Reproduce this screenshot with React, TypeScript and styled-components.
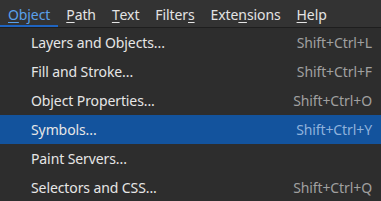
import styled, { createGlobalStyle } from 'styled-components';

const GlobalStyle = createGlobalStyle`
  body {
    margin: 0;
    background: #2d2d2d;
    font-family: 'Noto Sans', 'Open Sans', sans-serif;
  }
`;

type TopItem = { label: string; mnemonic: number; active?: boolean };

const topItems: TopItem[] = [
  { label: 'Object', mnemonic: 0, active: true },
  { label: 'Path', mnemonic: 0 },
  { label: 'Text', mnemonic: 0 },
  { label: 'Filters', mnemonic: 6 },
  { label: 'Extensions', mnemonic: 4 },
  { label: 'Help', mnemonic: 0 },
];

const menuItems = [
  { label: 'Layers and Objects...', shortcut: 'Shift+Ctrl+L' },
  { label: 'Fill and Stroke...', shortcut: 'Shift+Ctrl+F' },
  { label: 'Object Properties...', shortcut: 'Shift+Ctrl+O' },
  { label: 'Symbols...', shortcut: 'Shift+Ctrl+Y', selected: true },
  { label: 'Paint Servers...', shortcut: '' },
  { label: 'Selectors and CSS...', shortcut: 'Shift+Ctrl+Q' },
];

const Label = ({ text, at }: { text: string; at: number }) => (
  <>
    {text.slice(0, at)}
    <Mnemonic>{text[at]}</Mnemonic>
    {text.slice(at + 1)}
  </>
);

export default function App() {
  return (
    <>
      <GlobalStyle />
      <Window>
        <MenuBar>
          {topItems.map((item) => (
            <MenuBarItem key={item.label} $active={!!item.active}>
              <Label text={item.label} at={item.mnemonic} />
            </MenuBarItem>
          ))}
        </MenuBar>
        <Menu>
          {menuItems.map((item) => (
            <MenuRow key={item.label} $selected={!!item.selected}>
              <span>{item.label}</span>
              <Shortcut $selected={!!item.selected}>{item.shortcut}</Shortcut>
            </MenuRow>
          ))}
        </Menu>
      </Window>
    </>
  );
}

const Window = styled.div`
  width: 381px;
  height: 201px;
  overflow: hidden;
  background: #2d2d2d;
`;

const MenuBar = styled.div`
  display: flex;
  align-items: stretch;
  height: 28px;
  background: #333333;
  border-bottom: 1px solid #1e1e1e;
  box-sizing: border-box;
`;

const MenuBarItem = styled.div<{ $active: boolean }>`
  display: flex;
  align-items: center;
  padding: 3px 8px 0;
  font-size: 14px;
  letter-spacing: -0.1px;
  color: ${({ $active }) => ($active ? '#5aa0ea' : '#e4e4e4')};
  border-bottom: 2px solid ${({ $active }) => ($active ? '#1f64c0' : 'transparent')};
`;

const Mnemonic = styled.span`
  text-decoration: underline;
  text-underline-offset: 2px;
`;

const Menu = styled.div`
  display: flex;
  flex-direction: column;
`;

const MenuRow = styled.div<{ $selected: boolean }>`
  display: flex;
  align-items: center;
  justify-content: space-between;
  height: 29px;
  flex-shrink: 0;
  padding: 0 9px 0 31px;
  font-size: 14px;
  letter-spacing: -0.1px;
  color: #e6e6e6;
  background: ${({ $selected }) => ($selected ? '#13539d' : 'transparent')};
`;

const Shortcut = styled.span<{ $selected: boolean }>`
  color: ${({ $selected }) => ($selected ? '#8fb2dc' : '#a0a0a0')};
`;
